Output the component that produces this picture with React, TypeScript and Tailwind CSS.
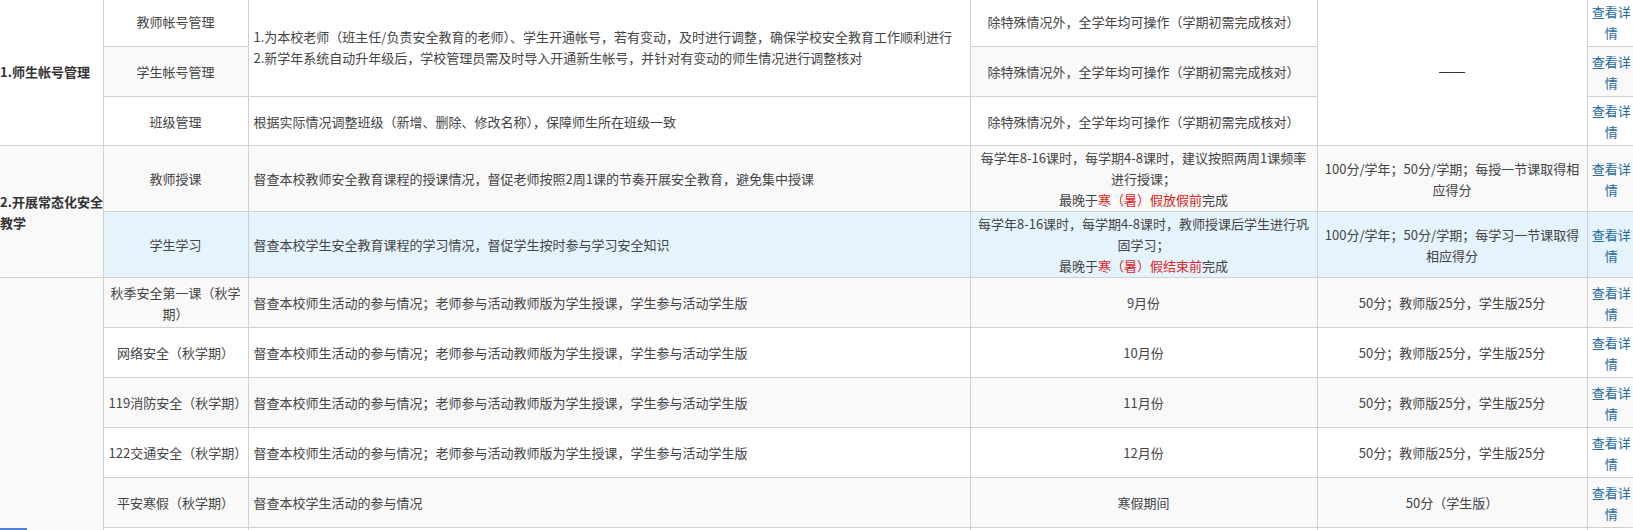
import React from "react";

const font = { fontFamily: '"Noto Sans CJK SC", "Noto Sans", sans-serif' };

const td = "border border-[#d0d0d0] align-middle px-[5px] py-0";
const tdc = td + " text-center";
const tdl = td + " text-left";
const linkTd = "border border-[#d0d0d0] border-r-0 align-middle px-[4px] py-0 text-center";

function Link() {
  return <a className="text-[#1f6aa5] cursor-pointer">查看详情</a>;
}

function Red({ children }: { children: React.ReactNode }) {
  return <span className="text-[#e02020]">{children}</span>;
}

const WHITE = "bg-white";
const GRAY = "bg-[#f9f9f9]";

const activities = [
  { name: <>秋季安全第一课（秋学<br />期）</>, desc: "督查本校师生活动的参与情况；老师参与活动教师版为学生授课，学生参与活动学生版", time: "9月份", score: "50分；教师版25分，学生版25分", bg: GRAY },
  { name: "网络安全（秋学期）", desc: "督查本校师生活动的参与情况；老师参与活动教师版为学生授课，学生参与活动学生版", time: "10月份", score: "50分；教师版25分，学生版25分", bg: WHITE },
  { name: "119消防安全（秋学期）", desc: "督查本校师生活动的参与情况；老师参与活动教师版为学生授课，学生参与活动学生版", time: "11月份", score: "50分；教师版25分，学生版25分", bg: GRAY },
  { name: "122交通安全（秋学期）", desc: "督查本校师生活动的参与情况；老师参与活动教师版为学生授课，学生参与活动学生版", time: "12月份", score: "50分；教师版25分，学生版25分", bg: WHITE },
  { name: "平安寒假（秋学期）", desc: "督查本校学生活动的参与情况", time: "寒假期间", score: "50分（学生版）", bg: GRAY },
];

export default function App() {
  return (
    <div className="relative w-[1633px] h-[530px] overflow-hidden bg-white" style={font}>
      <table className="table-fixed border-collapse w-[1635px] mt-[-4px] text-[13px] leading-[21px] text-[#444]">
        <colgroup>
          <col className="w-[103px]" />
          <col className="w-[145px]" />
          <col className="w-[722px]" />
          <col className="w-[347px]" />
          <col className="w-[270px]" />
          <col className="w-[48px]" />
        </colgroup>
        <tbody>
          <tr className="h-[50px] bg-white">
            <td rowSpan={3} className="border border-[#d0d0d0] border-l-0 align-middle px-0 py-0 text-left font-bold text-[#333] bg-white whitespace-nowrap">1.师生帐号管理</td>
            <td className={tdc}>教师帐号管理</td>
            <td rowSpan={2} className={tdl + " bg-white"}>
              1.为本校老师（班主任/负责安全教育的老师）、学生开通帐号，若有变动，及时进行调整，确保学校安全教育工作顺利进行<br />
              2.新学年系统自动升年级后，学校管理员需及时导入开通新生帐号，并针对有变动的师生情况进行调整核对
            </td>
            <td className={tdc}>除特殊情况外，全学年均可操作（学期初需完成核对）</td>
            <td rowSpan={3} className={tdc + " bg-white"}>
              <span className="text-[#333]" style={{ fontFamily: '"Liberation Sans", sans-serif' }}>——</span>
            </td>
            <td className={linkTd}><Link /></td>
          </tr>
          <tr className="h-[50px] bg-[#f9f9f9]">
            <td className={tdc}>学生帐号管理</td>
            <td className={tdc}>除特殊情况外，全学年均可操作（学期初需完成核对）</td>
            <td className={linkTd}><Link /></td>
          </tr>
          <tr className="h-[49px] bg-white">
            <td className={tdc}>班级管理</td>
            <td className={tdl}>根据实际情况调整班级（新增、删除、修改名称），保障师生所在班级一致</td>
            <td className={tdc}>除特殊情况外，全学年均可操作（学期初需完成核对）</td>
            <td className={linkTd}><Link /></td>
          </tr>
          <tr className="h-[66px] bg-[#f9f9f9]">
            <td rowSpan={2} className="border border-[#d0d0d0] border-l-0 align-middle px-0 py-0 text-left font-bold text-[#333] bg-[#f9f9f9] whitespace-nowrap">
              2.开展常态化安全<br />教学
            </td>
            <td className={tdc}>教师授课</td>
            <td className={tdl}>督查本校教师安全教育课程的授课情况，督促老师按照2周1课的节奏开展安全教育，避免集中授课</td>
            <td className={tdc}>
              每学年8-16课时，每学期4-8课时，建议按照两周1课频率<br />进行授课；<br />最晚于<Red>寒（暑）假放假前</Red>完成
            </td>
            <td className={tdc}>100分/学年；50分/学期；每授一节课取得相<br />应得分</td>
            <td className={linkTd}><Link /></td>
          </tr>
          <tr className="h-[66px] bg-[#e5f3fd]">
            <td className={tdc}>学生学习</td>
            <td className={tdl}>督查本校学生安全教育课程的学习情况，督促学生按时参与学习安全知识</td>
            <td className={tdc}>
              每学年8-16课时，每学期4-8课时，教师授课后学生进行巩<br />固学习；<br />最晚于<Red>寒（暑）假结束前</Red>完成
            </td>
            <td className={tdc}>100分/学年；50分/学期；每学习一节课取得<br />相应得分</td>
            <td className={linkTd}><Link /></td>
          </tr>
          {activities.map((a, i) => (
            <tr key={i} className={"h-[50px] " + a.bg}>
              {i === 0 && (
                <td rowSpan={6} className={"border border-[#d0d0d0] border-l-0 align-middle px-0 py-0 " + GRAY}></td>
              )}
              <td className={tdc + " px-[2px]"}>{a.name}</td>
              <td className={tdl}>{a.desc}</td>
              <td className={tdc}>{a.time}</td>
              <td className={tdc}>{a.score}</td>
              <td className={linkTd}><Link /></td>
            </tr>
          ))}
          <tr className={"h-[50px] " + WHITE}>
            <td className={tdc}>&nbsp;</td>
            <td className={tdl}>&nbsp;</td>
            <td className={tdc}>&nbsp;</td>
            <td className={tdc}>&nbsp;</td>
            <td className={linkTd}>&nbsp;</td>
          </tr>
        </tbody>
      </table>
      <div className="absolute left-0 bottom-0 w-[27px] h-[2px] bg-[#4f7fd6]" />
    </div>
  );
}
